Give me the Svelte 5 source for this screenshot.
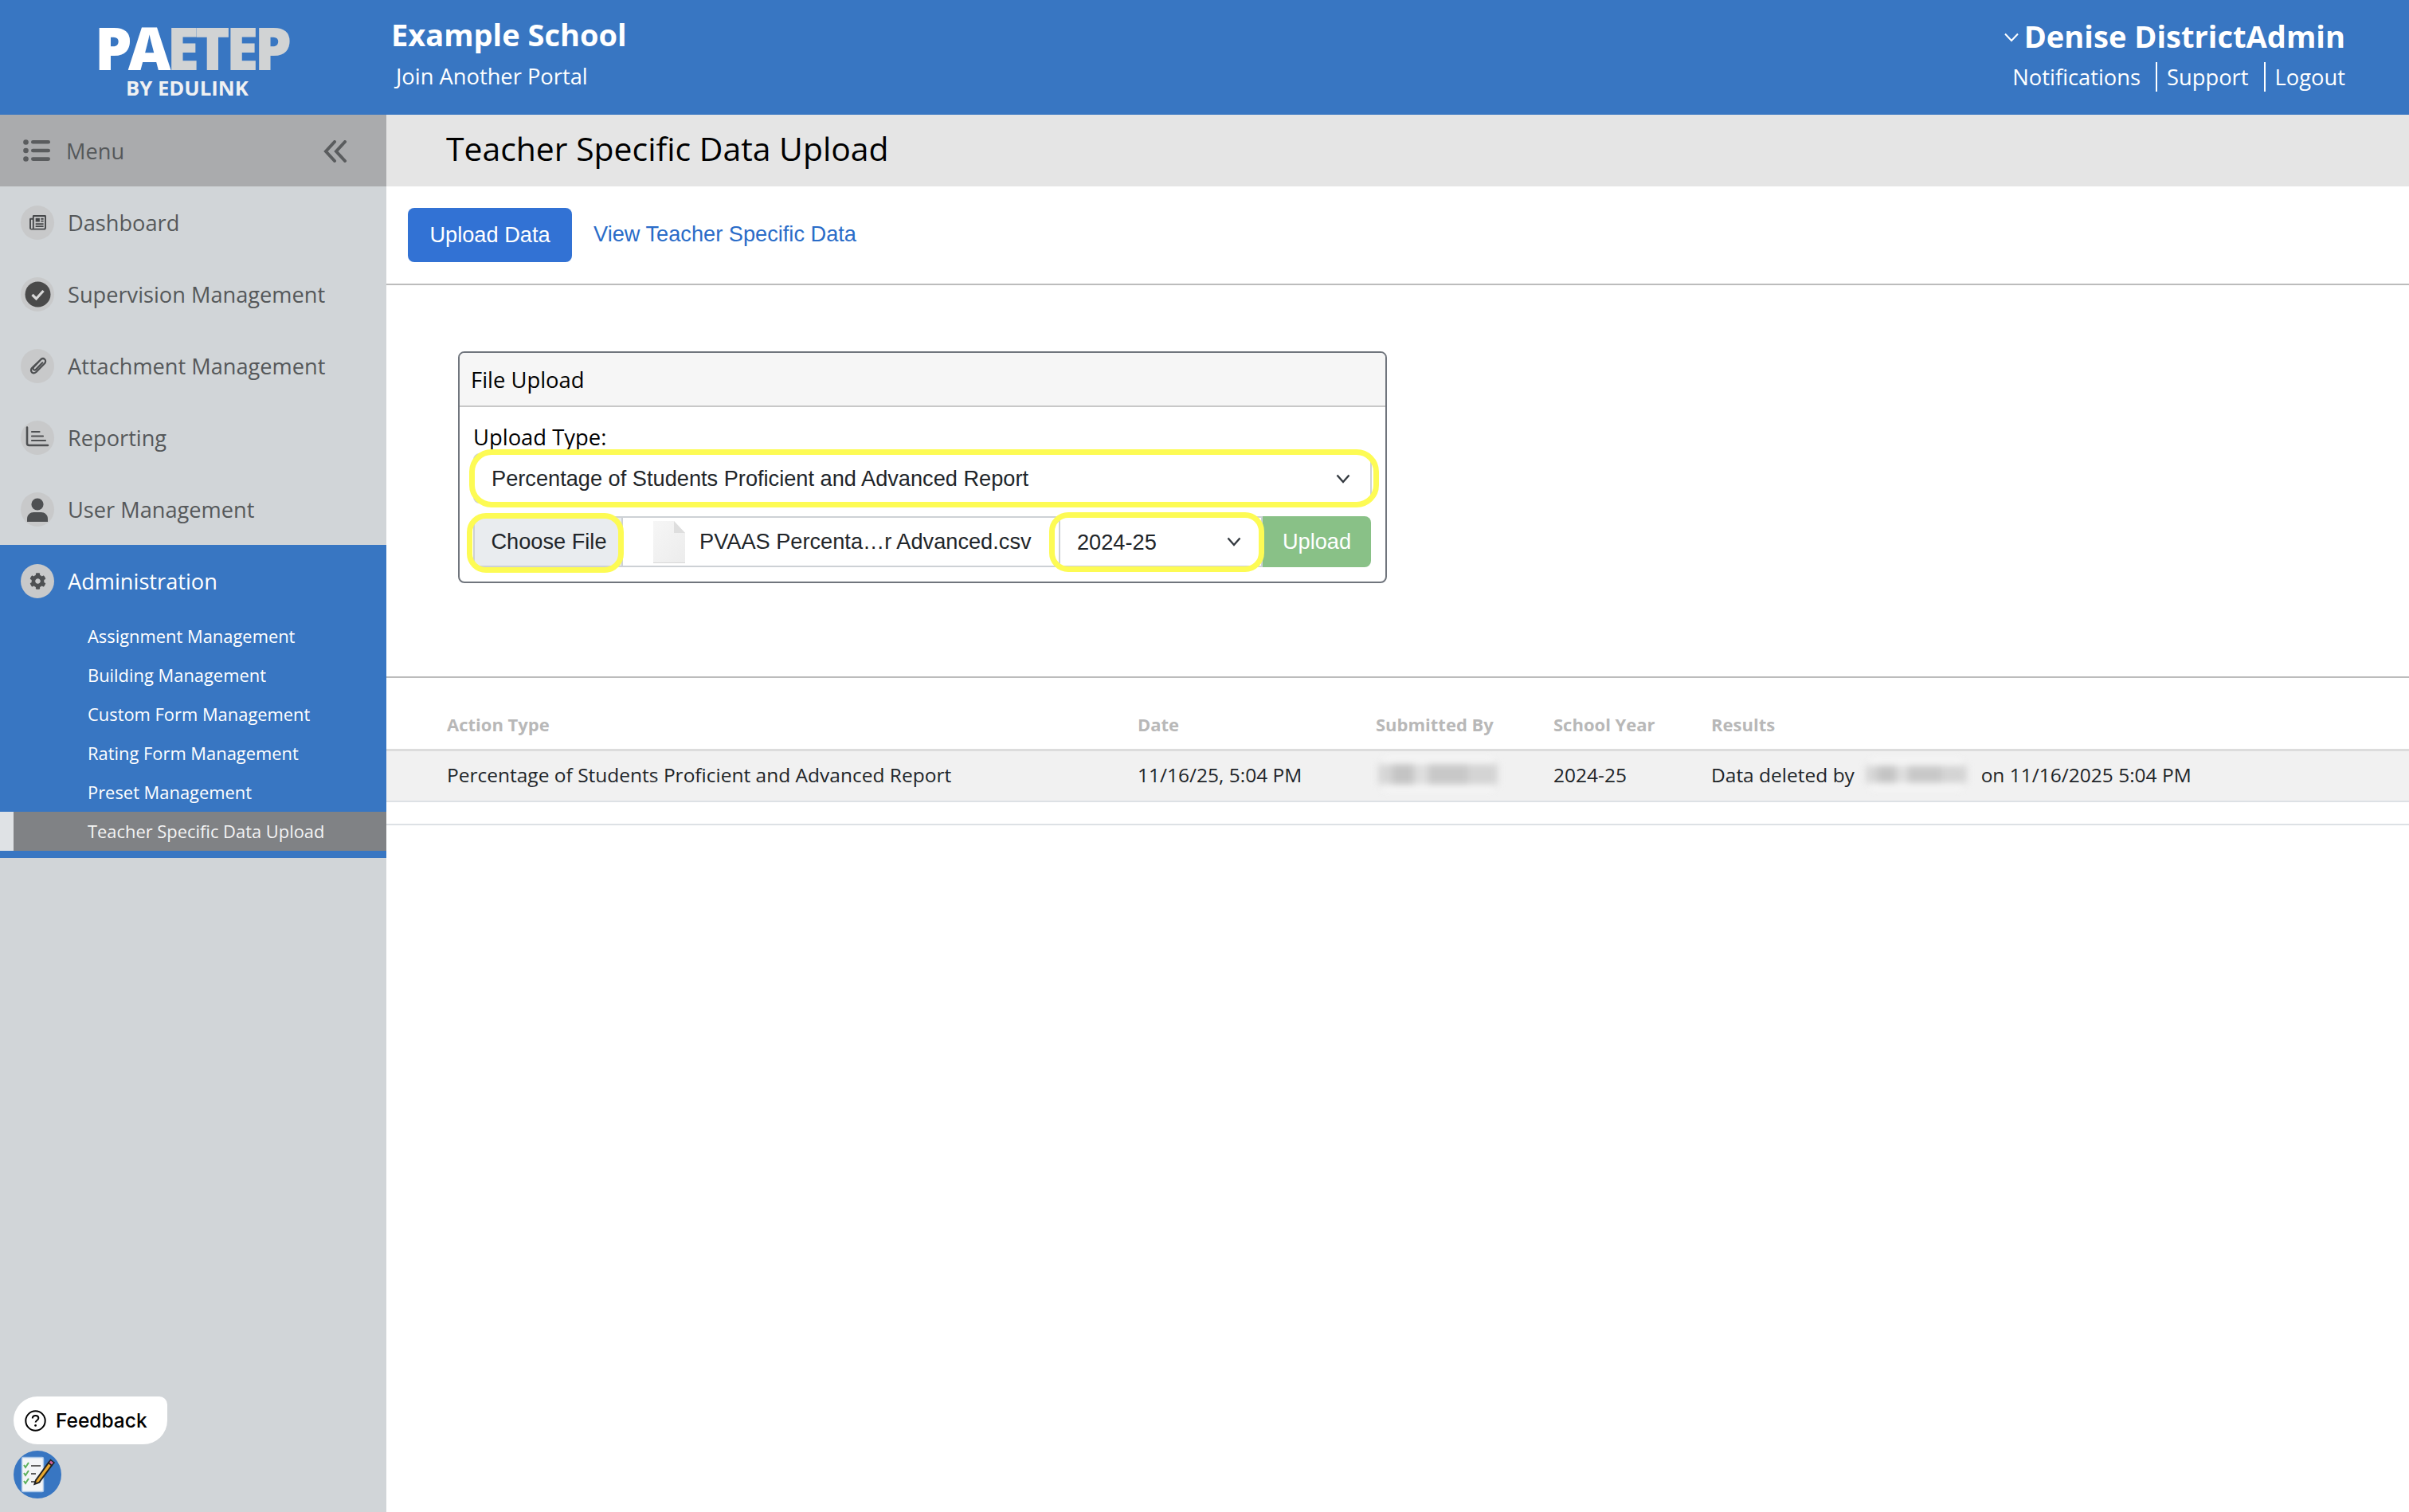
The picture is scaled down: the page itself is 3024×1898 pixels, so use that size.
<script>
  const cog = "M487.4 315.7l-42.6-24.6c4.3-23.2 4.3-47 0-70.2l42.6-24.6c4.9-2.8 7.1-8.6 5.5-14-11.1-35.6-30-67.8-54.7-94.6-3.8-4.1-10-5.1-14.8-2.3L380.8 110c-17.9-15.4-38.5-27.3-60.8-35.1V25.8c0-5.6-3.9-10.5-9.4-11.7-36.7-8.2-74.3-7.8-109.2 0-5.5 1.2-9.4 6.1-9.4 11.7V75c-22.2 7.9-42.8 19.8-60.8 35.1L88.7 85.5c-4.9-2.8-11-1.9-14.8 2.3-24.7 26.7-43.6 58.9-54.7 94.6-1.7 5.4.6 11.2 5.5 14L67.3 221c-4.3 23.2-4.3 47 0 70.2l-42.6 24.6c-4.9 2.8-7.1 8.6-5.5 14 11.1 35.6 30 67.8 54.7 94.6 3.8 4.1 10 5.1 14.8 2.3l42.6-24.6c17.9 15.4 38.5 27.3 60.8 35.1v49.2c0 5.6 3.9 10.5 9.4 11.7 36.7 8.2 74.3 7.8 109.2 0 5.5-1.2 9.4-6.1 9.4-11.7v-49.2c22.2-7.9 42.8-19.8 60.8-35.1l42.6 24.6c4.9 2.8 11 1.9 14.8-2.3 24.7-26.7 43.6-58.9 54.7-94.6 1.5-5.5-.7-11.3-5.6-14.1zM256 336c-44.1 0-80-35.9-80-80s35.9-80 80-80 80 35.9 80 80-35.9 80-80 80z";

  const navItems = ["Dashboard", "Supervision Management", "Attachment Management", "Reporting", "User Management"];
  const subItems = ["Assignment Management", "Building Management", "Custom Form Management", "Rating Form Management", "Preset Management"];
</script>

<div class="page">
  <header class="topbar">
    <div class="logo">
      <div class="logo-main"><span class="pa">PA</span><span class="etep">ETEP</span></div>
      <div class="logo-sub">BY EDULINK</div>
    </div>
    <div class="school">
      <div class="school-name">Example School</div>
      <a class="join">Join Another Portal</a>
    </div>
    <div class="account">
      <div class="account-name">
        <svg class="user-chevron" viewBox="0 0 18 12"><path d="M1 1.500 9 10l8-8.500" /></svg>
        Denise DistrictAdmin
      </div>
      <div class="account-links">
        <a>Notifications</a>
        <a class="sep">Support</a>
        <a class="sep">Logout</a>
      </div>
    </div>
  </header>

  <div class="body">
    <aside class="sidebar">
      <div class="menu-row">
        <svg class="list-icon" viewBox="0 0 34 28">
          <circle cx="3.500" cy="3.500" r="3.300" /><circle cx="3.500" cy="14" r="3.300" /><circle cx="3.500" cy="24.500" r="3.300" />
          <rect x="10" y="1" width="24" height="4.600" rx="2.300" /><rect x="10" y="11.700" width="24" height="4.600" rx="2.300" /><rect x="10" y="22.300" width="24" height="4.600" rx="2.300" />
        </svg>
        <span>Menu</span>
        <svg class="collapse" viewBox="0 0 30 28"><path d="M14 2 3 14l11 12M27 2 16 14l11 12" /></svg>
      </div>

      {#each navItems as item}
        <div class="nav-item">
          <span class="badge">
            {#if item === "Dashboard"}
              <svg width="21" height="19" viewBox="0 0 22 20">
                <path fill="#454749" d="M4 1.500A1.500 1.500 0 0 1 5.500 0h15A1.500 1.500 0 0 1 22 1.500v15a3 3 0 0 1-3 3H2.500A2.500 2.500 0 0 1 0 17V5.500A1.500 1.500 0 0 1 1.500 4H4z" />
                <path fill="#c8c9ca" d="M2 6h2v11a1 1 0 0 1-2 0zM6 2h14v14.500a1 1 0 0 1-1 1H5.800c.1-.3.200-.7.200-1z" />
                <path fill="#454749" d="M8 4h5.500v5H8zM15 4h3.500v2H15zM15 7.200h3.500v1.800H15zM8 10.800h10.500v1.800H8zM8 14h10.500v1.800H8z" />
              </svg>
            {:else if item === "Supervision Management"}
              <svg width="33" height="33" viewBox="0 0 33 33">
                <circle cx="16.500" cy="16.500" r="16" fill="#4a4a4a" />
                <path d="M9.500 17l5 5 9-10" fill="none" stroke="#d8d8d8" stroke-width="3.200" />
              </svg>
            {:else if item === "Attachment Management"}
              <svg width="24" height="24" viewBox="0 0 24 24" fill="none" stroke="#4e5052" stroke-width="2.200" stroke-linecap="round">
                <path d="M17 3.500 5.500 14.500c-3 3-1 6.800 2 6.800 1.300 0 2.300-.6 3.200-1.500l9.800-10c2.400-2.500 1.800-4.700.6-5.800-1.300-1.200-3.300-1.300-5 .4L7.500 13.500c-1.300 1.400-1.100 2.800-.2 3.500.9.800 2 .6 3-.4l8-8.300" />
              </svg>
            {:else if item === "Reporting"}
              <svg class="chart" width="30" height="26" viewBox="0 0 30 26" fill="none" stroke="#4e5052" stroke-linecap="round">
                <path stroke-width="2.600" d="M2 1.500V21.500a2.500 2.500 0 0 0 2.500 2.500H28" />
                <path stroke-width="2.200" d="M8 7h9.500M8 12.500h14M8 18h17" />
              </svg>
            {:else if item === "User Management"}
              <svg class="person" width="26" height="30" viewBox="0 0 26 30" fill="#4e5052">
                <circle cx="13" cy="8" r="7.600" />
                <path d="M0 30v-3.500C0 21 4 18 8.500 18h9C22 18 26 21 26 26.500V30z" />
              </svg>
            {/if}
          </span>
          <span>{item}</span>
        </div>
      {/each}

      <div class="admin">
        <div class="nav-item current">
          <span class="badge">
            <svg width="21" height="21" viewBox="0 0 512 512"><path fill="#4e5052" d={cog} /></svg>
          </span>
          <span>Administration</span>
        </div>
        <div class="sub-list">
          {#each subItems as sub}
            <div class="sub-item">{sub}</div>
          {/each}
          <div class="sub-item active">Teacher Specific Data Upload</div>
        </div>
      </div>

      <div class="side-bottom">
        <div class="feedback">
          <svg width="27" height="27" viewBox="0 0 27 27">
            <circle cx="13.500" cy="13.500" r="12.200" fill="none" stroke="#000" stroke-width="2" />
            <path d="M9.800 10.500c0-2.200 1.700-3.600 3.800-3.600s3.700 1.300 3.700 3.300c0 2.800-3.700 2.800-3.700 5.400" fill="none" stroke="#000" stroke-width="2" />
            <circle cx="13.600" cy="19.400" r="1.400" />
          </svg>
          <span>Feedback</span>
        </div>
        <div class="survey">
          <svg width="60" height="60" viewBox="0 0 60 60">
            <circle cx="30" cy="30" r="30" fill="#3876c2" />
            <rect x="10.500" y="8.500" width="27" height="43" rx="1.500" fill="#f3f5f7" stroke="#a9c6e8" stroke-width="1.500" />
            <path d="M13 18l2 3 4-6M13 28l2 3 4-6M13 38l2 3 4-6" fill="none" stroke="#5cb15c" stroke-width="2" />
            <path d="M22 19h12M22 29h6M22 39h12" stroke="#5f5f5f" stroke-width="2.200" />
            <path d="M28 37 44 15l4 3.500-16 21.500-5.500 2z" fill="#e9a92f" stroke="#222" stroke-width="2" />
            <path d="M44 15l2.500-3.500 4.500 3.500-3 3.500z" fill="#d0609c" stroke="#222" stroke-width="1.500" />
          </svg>
        </div>
      </div>
    </aside>

    <main class="content">
      <div class="title-bar"><h1>Teacher Specific Data Upload</h1></div>

      <nav class="tabs">
        <button class="tab-on">Upload Data</button>
        <a class="tab-link">View Teacher Specific Data</a>
      </nav>

      <section class="upload-area">
        <div class="card">
          <div class="card-head">File Upload</div>
          <div class="card-body">
            <label class="type-label" for="upload-type">Upload Type:</label>
            <div class="field">
              <select id="upload-type" class="input-select">
                <option>Percentage of Students Proficient and Advanced Report</option>
              </select>
              <svg class="chevron" viewBox="0 0 18 12"><path d="M1.500 1.500 9 10l7.500-8.500" /></svg>
              <span class="mark mark-type"></span>
            </div>
            <div class="file-row">
              <div class="choose">
                Choose File
                <span class="mark mark-choose"></span>
              </div>
              <div class="file-name">
                <svg class="file-icon" width="42" height="53" viewBox="0 0 42 53">
                  <defs>
                    <linearGradient id="sheet" x1="0" y1="0" x2="1" y2="1">
                      <stop offset="0" stop-color="#f6f6f6" />
                      <stop offset="1" stop-color="#ececec" />
                    </linearGradient>
                  </defs>
                  <path d="M1 0h26l14 15v37H1z" fill="url(#sheet)" />
                  <path d="M27 0v15h14z" fill="#dedede" />
                  <path d="M1 52h40v1H1z" fill="#d8d8d8" />
                </svg>
                <span>PVAAS Percenta…r Advanced.csv</span>
              </div>
              <div class="field year">
                <select class="input-select">
                  <option>2024-25</option>
                </select>
                <svg class="chevron" viewBox="0 0 18 12"><path d="M1.500 1.500 9 10l7.500-8.500" /></svg>
                <span class="mark mark-year"></span>
              </div>
              <button class="upload-btn">Upload</button>
            </div>
          </div>
        </div>
      </section>

      <section class="history">
        <div class="table-row table-head">
          <div>Action Type</div>
          <div>Date</div>
          <div>Submitted By</div>
          <div>School Year</div>
          <div>Results</div>
        </div>
        <div class="table-row table-data">
          <div>Percentage of Students Proficient and Advanced Report</div>
          <div>11/16/25, 5:04 PM</div>
          <div><span class="blurred wide"></span></div>
          <div>2024-25</div>
          <div class="result">Data deleted by <span class="blurred"></span> on 11/16/2025 5:04 PM</div>
        </div>
        <div class="table-end"></div>
      </section>
    </main>
  </div>
</div>

<style>
  :global(body) {
    margin: 0;
    background: #fff;
  }

  .page {
    width: 3024px;
    height: 1898px;
    overflow: hidden;
    display: flex;
    flex-direction: column;
    font-family: "Open Sans", sans-serif;
  }

  .topbar {
    height: 144px;
    flex: none;
    background: #3876c2;
    color: #fff;
    display: flex;
    box-sizing: border-box;
  }

  .logo {
    width: 491px;
    flex: none;
    box-sizing: border-box;
    padding: 24px 0 0 119px;
    font-weight: 700;
  }

  .logo-main {
    font-size: 74px;
    font-weight: 800;
    line-height: 72px;
    letter-spacing: -5px;
  }

  .pa {
    color: #fff;
  }

  .etep {
    color: #d1d3d4;
  }

  .logo-sub {
    font-size: 25.700px;
    line-height: 30px;
    padding-left: 39px;
    color: #f0f1f2;
  }

  .school {
    padding-top: 16px;
  }

  .school-name {
    font-size: 38px;
    font-weight: 700;
    line-height: 54px;
  }

  .join {
    display: block;
    font-size: 27.300px;
    line-height: 38px;
    margin: 7px 0 0 6px;
  }

  .account {
    margin-left: auto;
    padding: 18px 80px 0 0;
    text-align: right;
  }

  .account-name {
    font-size: 38.100px;
    font-weight: 700;
    line-height: 54px;
    display: flex;
    align-items: center;
    justify-content: flex-end;
    gap: 7px;
  }

  .user-chevron {
    width: 18px;
    height: 12px;
    margin-top: 4px;
    fill: none;
    stroke: #fff;
    stroke-width: 2;
  }

  .account-links {
    font-size: 27.300px;
    line-height: 38px;
    margin-top: 6px;
  }

  .sep {
    border-left: 2px solid #fff;
    padding-left: 12px;
    margin-left: 12px;
  }

  .body {
    flex: 1;
    display: flex;
    min-height: 0;
  }

  .sidebar {
    width: 485px;
    flex: none;
    background: #d1d5d8;
    color: #55585a;
    display: flex;
    flex-direction: column;
    font-size: 27.200px;
  }

  .menu-row {
    height: 90px;
    flex: none;
    background: #aaabad;
    display: flex;
    align-items: center;
    padding: 0 49px 0 29px;
    gap: 20px;
  }

  .list-icon {
    width: 34px;
    height: 28px;
    fill: #5a5c5e;
  }

  .collapse {
    width: 30px;
    height: 28px;
    margin-top: 2px;
    margin-left: auto;
    fill: none;
    stroke: #5a5c5e;
    stroke-width: 4;
    stroke-linecap: round;
  }

  .nav-item {
    height: 90px;
    flex: none;
    display: flex;
    align-items: center;
    padding-left: 26px;
    gap: 17px;
  }

  .badge {
    width: 42px;
    height: 43px;
    border-radius: 50%;
    background: #c8c9ca;
    display: flex;
    align-items: center;
    justify-content: center;
    flex: none;
    overflow: hidden;
  }

  .chart {
    margin-top: -2px;
  }

  .person {
    margin-top: 2px;
  }

  .admin {
    background: #3876c2;
    color: #fff;
    padding-bottom: 9px;
  }

  .sub-item {
    height: 49px;
    line-height: 49px;
    font-size: 21.900px;
    padding-left: 110px;
  }

  .active {
    background: #808285;
    border-left: 17px solid #dfe2e5;
    padding-left: 93px;
    color: #f4f4f4;
  }

  .side-bottom {
    margin-top: auto;
    padding: 0 0 17px 17px;
  }

  .feedback {
    width: 193px;
    height: 60px;
    background: #fff;
    border-radius: 30px 10px 30px 30px;
    display: flex;
    align-items: center;
    gap: 12px;
    padding-left: 14px;
    box-sizing: border-box;
    font-family: Inter, sans-serif;
    font-size: 24.500px;
    font-weight: 500;
    color: #000;
  }

  .survey {
    height: 60px;
    margin-top: 8px;
  }

  .content {
    flex: 1;
    min-width: 0;
  }

  .title-bar {
    height: 90px;
    box-sizing: border-box;
    background: #e5e5e5;
    display: flex;
    align-items: center;
    padding: 0 0 6px 75px;
  }

  h1 {
    margin: 0;
    font-size: 40.900px;
    font-weight: 400;
    color: #000;
  }

  .tabs {
    height: 124px;
    box-sizing: border-box;
    border-bottom: 2px solid #bcbcbc;
    display: flex;
    align-items: flex-start;
    padding: 27px 0 0 27px;
    gap: 27px;
    font-family: "Liberation Sans", sans-serif;
    font-size: 27.200px;
  }

  .tab-on {
    width: 206px;
    height: 68px;
    background: #3272d4;
    color: #fff;
    border: none;
    border-radius: 8px;
    font: inherit;
    padding: 0;
  }

  .tab-link {
    color: #2a6cc8;
    line-height: 66px;
  }

  .upload-area {
    height: 493px;
    box-sizing: border-box;
    border-bottom: 2px solid #bcbcbc;
    padding: 83px 0 0 90px;
  }

  .card {
    width: 1166px;
    height: 291px;
    box-sizing: border-box;
    border: 2px solid #70757d;
    border-radius: 8px;
    overflow: hidden;
  }

  .card-head {
    height: 68px;
    box-sizing: border-box;
    background: #f6f6f6;
    border-bottom: 2px solid #c8c8c8;
    padding-left: 14px;
    font-size: 27.400px;
    line-height: 67px;
    color: #000;
  }

  .card-body {
    padding: 0 17px;
  }

  .type-label {
    display: block;
    font-size: 27.400px;
    line-height: 38px;
    margin-top: 19px;
    color: #000;
  }

  .field {
    position: relative;
    height: 63px;
    margin-top: 1px;
  }

  .input-select {
    appearance: none;
    display: block;
    width: 100%;
    height: 100%;
    box-sizing: border-box;
    border: 2px solid #cdd1d5;
    border-radius: 8px;
    background: #fff;
    padding: 0 0 0 21px;
    font-family: "Liberation Sans", sans-serif;
    font-size: 27.200px;
    color: #212529;
  }

  .chevron {
    position: absolute;
    right: 27px;
    top: 26px;
    width: 18px;
    height: 12px;
    fill: none;
    stroke: #343a40;
    stroke-width: 2.400;
    pointer-events: none;
  }

  .mark {
    position: absolute;
    border: 7px solid #fdfb54;
    pointer-events: none;
  }

  .mark-type {
    inset: -5px -9px -5px -5px;
    border-radius: 28px;
  }

  .mark-choose {
    inset: -6px -3px -9px -10px;
    border-radius: 24px;
  }

  .mark-year {
    inset: -5px -2px -6px -12px;
    border-radius: 24px;
  }

  .file-row {
    display: flex;
    height: 64px;
    margin-top: 16px;
    font-family: "Liberation Sans", sans-serif;
    font-size: 27.200px;
    color: #212529;
  }

  .choose {
    position: relative;
    width: 188px;
    flex: none;
    box-sizing: border-box;
    background: #e9ecef;
    border: 2px solid #cdd1d5;
    border-radius: 8px 0 0 8px;
    padding-left: 2px;
    line-height: 59px;
    text-align: center;
  }

  .file-name {
    width: 547px;
    flex: none;
    box-sizing: border-box;
    border-top: 2px solid #cdd1d5;
    border-bottom: 2px solid #cdd1d5;
    display: flex;
    align-items: center;
    gap: 17px;
    padding-left: 37px;
  }

  .file-icon {
    flex: none;
  }

  .year {
    width: 256px;
    height: 64px;
    flex: none;
    margin-top: 0;
  }

  .year .input-select {
    border-radius: 0;
  }

  .upload-btn {
    width: 136px;
    flex: none;
    background: #89c187;
    color: #fff;
    border: none;
    border-radius: 0 8px 8px 0;
    font: inherit;
    padding: 0;
  }

  .history {
    padding-top: 32px;
  }

  .table-row {
    display: grid;
    grid-template-columns: 867px 299px 223px 198px 1fr;
    padding-left: 76px;
    align-items: center;
  }

  .table-head {
    height: 51px;
    padding-bottom: 6px;
    font-size: 22px;
    font-weight: 700;
    color: #b8b8b8;
    border-bottom: 3px solid #dcdcdc;
  }

  .table-data {
    height: 58px;
    padding-bottom: 4px;
    background: #f1f1f1;
    border-bottom: 2px solid #dde1e5;
    font-size: 24.500px;
    color: #212529;
  }

  .table-end {
    height: 27px;
    border-bottom: 2px solid #dde1e5;
  }

  .result {
    display: flex;
    align-items: center;
    white-space: pre;
  }

  .blurred {
    display: block;
    width: 127px;
    height: 22px;
    margin: 0 11px 0 8px;
    background: linear-gradient(90deg, #d6d6d6 0 12%, #c4c4c4 12% 30%, #dedede 30% 42%, #c8c8c8 42% 75%, #d4d4d4 75% 100%);
    box-shadow: 0 -14px 0 -6px #f7f7f7, 0 14px 0 -6px #f7f7f7;
    filter: blur(4px);
  }

  .wide {
    width: 150px;
    height: 26px;
    margin: 0 0 0 3px;
  }
</style>
